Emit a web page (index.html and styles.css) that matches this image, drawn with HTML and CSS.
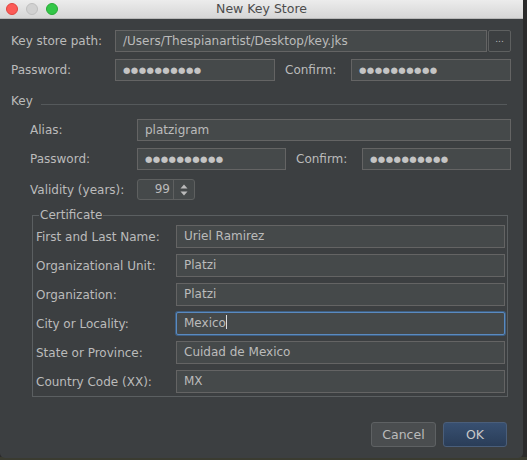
FILE: index.html
```html
<!DOCTYPE html>
<html>
<head>
<meta charset="utf-8">
<link rel="stylesheet" href="styles.css">
</head>
<body>
<div class="window">
  <div class="titlebar">
    <div class="lights">
      <span class="light red"></span>
      <span class="light gray"></span>
      <span class="light green"></span>
    </div>
    <div class="title">New Key Store</div>
  </div>
  <div class="content">
    <div class="row">
      <div class="lbl top-lbl">Key store path:</div>
      <div class="field grow">/Users/Thespianartist/Desktop/key.jks</div>
      <div class="browse">...</div>
    </div>
    <div class="row">
      <div class="lbl top-lbl">Password:</div>
      <div class="field pw top-pw">●●●●●●●●●●</div>
      <div class="lbl confirm">Confirm:</div>
      <div class="field pw top-pw">●●●●●●●●●●</div>
    </div>

    <div class="section-head">
      <span class="lbl">Key</span>
      <span class="rule"></span>
    </div>

    <div class="key">
      <div class="row">
        <div class="lbl key-lbl">Alias:</div>
        <div class="field grow">platzigram</div>
      </div>
      <div class="row">
        <div class="lbl key-lbl">Password:</div>
        <div class="field pw key-pw">●●●●●●●●●●</div>
        <div class="lbl confirm">Confirm:</div>
        <div class="field pw key-pw">●●●●●●●●●●</div>
      </div>
      <div class="row spin-row">
        <div class="lbl key-lbl">Validity (years):</div>
        <div class="spinner">
          <span class="spin-val">99</span>
          <span class="spin-arrows">
            <svg width="10" height="14" viewBox="0 0 10 14"><path d="M1.5 5.5 L5 1.5 L8.5 5.5 Z" fill="#bbbbbb"/><path d="M1.5 8.5 L5 12.5 L8.5 8.5 Z" fill="#bbbbbb"/></svg>
          </span>
        </div>
      </div>
    </div>

    <fieldset class="cert">
      <legend>Certificate</legend>
      <div class="cert-row">
        <div class="lbl cert-lbl">First and Last Name:</div>
        <div class="field cert-field">Uriel Ramirez</div>
      </div>
      <div class="cert-row">
        <div class="lbl cert-lbl">Organizational Unit:</div>
        <div class="field cert-field">Platzi</div>
      </div>
      <div class="cert-row">
        <div class="lbl cert-lbl">Organization:</div>
        <div class="field cert-field">Platzi</div>
      </div>
      <div class="cert-row">
        <div class="lbl cert-lbl">City or Locality:</div>
        <div class="field cert-field focused">Mexico<span class="caret"></span></div>
      </div>
      <div class="cert-row">
        <div class="lbl cert-lbl">State or Province:</div>
        <div class="field cert-field">Cuidad de Mexico</div>
      </div>
      <div class="cert-row">
        <div class="lbl cert-lbl">Country Code (XX):</div>
        <div class="field cert-field">MX</div>
      </div>
    </fieldset>

    <div class="buttons">
      <div class="btn cancel">Cancel</div>
      <div class="btn ok">OK</div>
    </div>
  </div>
</div>
</body>
</html>
```

FILE: styles.css
```css
* { box-sizing: border-box; }

html, body {
  margin: 0;
  padding: 0;
}

body {
  width: 527px;
  height: 460px;
  overflow: hidden;
  background: linear-gradient(to bottom, #2b2b2b 0, #2b2b2b 457px, #3a3b30 457px);
  font-family: "DejaVu Sans", sans-serif;
  font-size: 12px;
  color: #bbbbbb;
}

.window {
  width: 523px;
  height: 458px;
  background: #3c3f41;
  border-radius: 0 0 5px 5px;
  overflow: hidden;
}

.titlebar {
  height: 19px;
  background: linear-gradient(to bottom, #ececec, #d6d6d6);
  border-bottom: 1px solid #b8b8b8;
  display: flex;
  align-items: center;
  position: relative;
}

.lights {
  display: flex;
  gap: 8px;
  padding-left: 6px;
}

.light {
  width: 12px;
  height: 12px;
  border-radius: 50%;
  display: block;
}
.light.red { background: #fc5b57; border: 1px solid #e0443e; }
.light.gray { background: #d1d1d1; border: 1px solid #bfbfbf; }
.light.green { background: #33c748; border: 1px solid #27aa35; }

.title {
  position: absolute;
  left: 0;
  right: 0;
  top: 0;
  line-height: 18px;
  text-align: center;
  color: #4c4c4c;
  font-size: 12.5px;
}

.content {
  padding: 11px 12px 0 11px;
  display: flex;
  flex-direction: column;
  gap: 7px;
}

.row {
  display: flex;
  align-items: center;
  height: 22px;
}

.lbl {
  color: #bbbbbb;
  white-space: nowrap;
}

.top-lbl { width: 104px; }

.field {
  height: 22px;
  background: #45494a;
  border: 1px solid #646464;
  line-height: 20px;
  padding-left: 7px;
  color: #bbbbbb;
  white-space: nowrap;
  overflow: hidden;
}

.grow { flex: 1; }

.pw {
  font-size: 8.5px;
  letter-spacing: 0.45px;
  color: #c4c4c4;
}

.top-pw { width: 160px; }

.confirm {
  width: 66px;
  margin-left: 10px;
}

.browse {
  width: 23px;
  height: 22px;
  margin-left: 1px;
  border: 1px solid #5e6060;
  border-radius: 2px;
  text-align: center;
  line-height: 16px;
  font-size: 9px;
  color: #bbbbbb;
}

.section-head {
  display: flex;
  align-items: center;
  height: 16px;
  margin-top: 5px;
}

.rule {
  flex: 1;
  height: 1px;
  background: #55595b;
  margin: 7px 4px 0 8px;
}

.key {
  padding-left: 19px;
  margin-top: 3px;
  display: flex;
  flex-direction: column;
  gap: 7px;
}

.key-lbl { width: 107px; }
.key-pw { width: 149px; }

.spin-row {
  margin-top: 2px;
  height: 21px;
}

.spinner {
  width: 58px;
  height: 21px;
  border: 1px solid #5e6060;
  border-radius: 3px;
  background: #45494a;
  display: flex;
}

.spin-val {
  width: 36px;
  text-align: right;
  padding-right: 3px;
  line-height: 19px;
  border-right: 1px solid #5e6060;
}

.spin-arrows {
  flex: 1;
  display: flex;
  align-items: center;
  justify-content: center;
}

.cert {
  margin: 0 3px 0 21px;
  padding: 2px 2px 3px 3px;
  border: 1px solid #5b5f61;
  min-inline-size: 0;
  display: flex;
  flex-direction: column;
  gap: 6px;
}

.cert legend {
  padding: 0 1px;
  margin-left: 3px;
  line-height: 16px;
  color: #bbbbbb;
}

.cert-row {
  display: flex;
  align-items: center;
  height: 23px;
}

.cert-lbl { width: 140px; }

.cert-field {
  flex: 1;
  height: 23px;
  line-height: 21px;
}

.focused {
  border: 1px solid #5a8ac0;
  box-shadow: 0 0 0 1px #3e5f83;
  border-radius: 2px;
}

.caret {
  display: inline-block;
  width: 1px;
  height: 14px;
  background: #dddddd;
  vertical-align: -2px;
}

.buttons {
  display: flex;
  justify-content: flex-end;
  gap: 7px;
  margin-top: 18px;
  margin-right: 4px;
}

.btn {
  height: 25px;
  line-height: 23px;
  text-align: center;
  border-radius: 3px;
  font-size: 12.5px;
}

.cancel {
  width: 65px;
  background: #4a4d4f;
  border: 1px solid #5e6163;
  color: #bbbbbb;
}

.ok {
  width: 64px;
  background: linear-gradient(to bottom, #385071, #2a3d58);
  border: 1px solid #4a5e7a;
  color: #c8c8c8;
}
```
